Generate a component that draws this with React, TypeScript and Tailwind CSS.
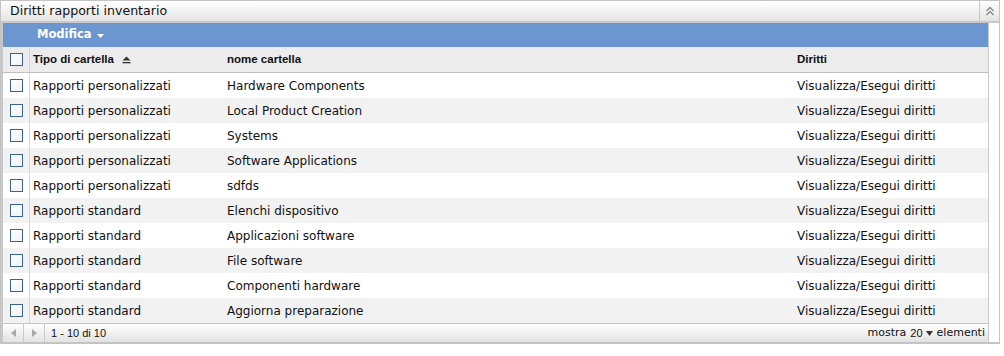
import React from "react";

const rows: [string, string][] = [
  ["Rapporti personalizzati", "Hardware Components"],
  ["Rapporti personalizzati", "Local Product Creation"],
  ["Rapporti personalizzati", "Systems"],
  ["Rapporti personalizzati", "Software Applications"],
  ["Rapporti personalizzati", "sdfds"],
  ["Rapporti standard", "Elenchi dispositivo"],
  ["Rapporti standard", "Applicazioni software"],
  ["Rapporti standard", "File software"],
  ["Rapporti standard", "Componenti hardware"],
  ["Rapporti standard", "Aggiorna preparazione"],
];

function Box() {
  return <div className="w-[13px] h-[13px] border border-[#3b6491] bg-gradient-to-br from-white to-[#eef2f6]" />;
}

const lib = { fontFamily: '"Liberation Sans", Arial, sans-serif' };

export default function App() {
  return (
    <div className="w-[1004px] h-[356px] bg-white text-[#111]" style={{ fontFamily: '"DejaVu Sans", sans-serif' }}>
      <div className="w-[1000px] h-[344px] border border-[#c4c4c4] border-b-2 flex flex-col">
        {/* Title bar */}
        <div className="h-[22px] flex border-b-2 border-[#c8c8c8] bg-gradient-to-b from-white to-[#e4e4e4]">
          <div className="flex-1 flex items-center pl-[9px] text-[12.6px]">Diritti rapporti inventario</div>
          <div className="w-[20px] border-l border-[#c8c8c8] flex items-center justify-center">
            <svg width="10" height="10" viewBox="0 0 10 10" fill="none" stroke="#888" strokeWidth="1.3">
              <path d="M1.5 5 L5 1.5 L8.5 5" />
              <path d="M1.5 9 L5 5.5 L8.5 9" />
            </svg>
          </div>
        </div>
        {/* Body */}
        <div className="flex-1 flex pl-[2px] bg-[#c8c8c8]">
          <div className="flex-1 flex bg-white">
            <div className="w-[986px] flex flex-col border-r border-[#c8c8c8]">
              {/* Blue toolbar */}
              <div className="h-[24px] bg-[#6b96cf] flex items-center pl-[34px]">
                <span className="text-white font-bold text-[11.5px]">Modifica</span>
                <svg width="7" height="4" viewBox="0 0 7 4" className="ml-[5px] mt-[1px]">
                  <path d="M0 0 L7 0 L3.5 4 Z" fill="#fff" />
                </svg>
              </div>
              {/* Header */}
              <div className="h-[26px] flex bg-[#ececec] border-b border-[#c0c0c0] text-[11.5px] font-bold" style={lib}>
                <div className="w-[27px] flex items-center justify-center border-r border-[#d4d4d4] pl-[1px]">
                  <Box />
                </div>
                <div className="w-[197px] flex items-center pl-[3px]">
                  Tipo di cartella
                  <svg width="9" height="8" viewBox="0 0 9 8" className="ml-[8px]">
                    <path d="M0.5 4.5 L4.5 0.5 L8.5 4.5 Z" fill="#333" />
                    <rect x="0.5" y="6" width="8" height="1.3" fill="#333" />
                  </svg>
                </div>
                <div className="w-[570px] flex items-center">nome cartella</div>
                <div className="flex-1 flex items-center">Diritti</div>
              </div>
              {/* Rows */}
              {rows.map(([a, b], i) => (
                <div key={i} className={`h-[25px] flex text-[12px] ${i % 2 === 1 ? "bg-[#f2f2f2]" : "bg-white"}`}>
                  <div className="w-[27px] flex items-center justify-center border-r border-[#d4d4d4] pl-[1px]">
                    <Box />
                  </div>
                  <div className="w-[197px] flex items-center pl-[3px]">{a}</div>
                  <div className="w-[570px] flex items-center">{b}</div>
                  <div className="flex-1 flex items-center">Visualizza/Esegui diritti</div>
                </div>
              ))}
              {/* Footer */}
              <div className="flex-1 flex items-center border-t border-[#c4c4c4] bg-gradient-to-b from-white to-[#e2e2e2] text-[11px]">
                <div className="w-[21px] h-full flex items-center justify-center border-r border-[#c8c8c8]">
                  <svg width="5" height="8" viewBox="0 0 5 8"><path d="M5 0 L0 4 L5 8 Z" fill="#aaa" /></svg>
                </div>
                <div className="w-[21px] h-full flex items-center justify-center border-r border-[#c8c8c8]">
                  <svg width="5" height="8" viewBox="0 0 5 8"><path d="M0 0 L5 4 L0 8 Z" fill="#aaa" /></svg>
                </div>
                <div className="flex-1 pl-[6px]" style={lib}>1 - 10 di 10</div>
                <div className="pr-[3px] flex items-center">
                  <span>mostra</span>
                  <span className="ml-[4px]" style={lib}>20</span>
                  <svg width="7" height="5" viewBox="0 0 7 5" className="ml-[3px] mr-[4px]">
                    <path d="M0 0 L7 0 L3.5 5 Z" fill="#333" />
                  </svg>
                  <span>elementi</span>
                </div>
              </div>
            </div>
            <div className="flex-1" />
          </div>
        </div>
      </div>
    </div>
  );
}
